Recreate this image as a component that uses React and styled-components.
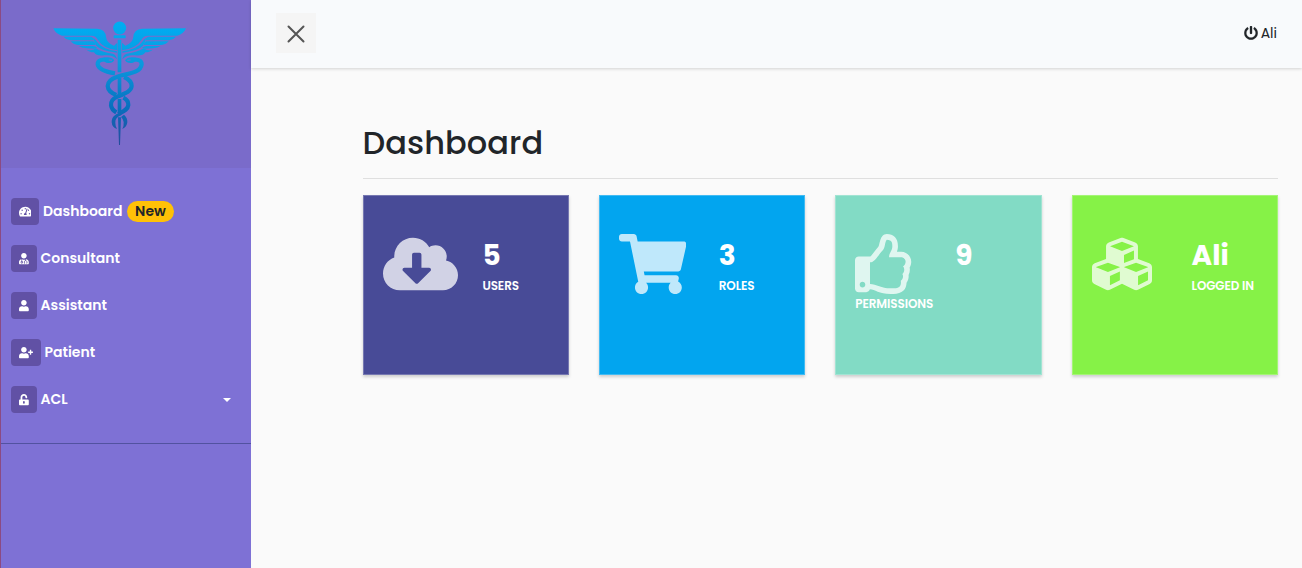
import React from 'react';
import styled, { createGlobalStyle } from 'styled-components';
import {
  FaTachometerAlt, FaUserMd, FaUser, FaUserPlus, FaUnlockAlt, FaPowerOff,
  FaCloudDownloadAlt, FaShoppingCart, FaRegThumbsUp, FaCubes,
} from 'react-icons/fa';

const GlobalStyle = createGlobalStyle`
  *, *::before, *::after { box-sizing: border-box; }
  body { margin: 0; background: #fafafa; color: #212529; font-family: Poppins, Inter, sans-serif; }
`;

const Page = styled.div`
  display: flex;
  height: 568px;
  overflow: hidden;
`;

const Sidebar = styled.aside`
  width: 251px;
  flex: none;
  background: #7e71d5;
  border-left: 1px solid #8b4a83;
  color: #fff;
`;

const LogoPanel = styled.div`
  height: 168px;
  padding: 10px 0 0 39px;
  background: #7a6bca;
`;

const Menu = styled.ul`
  margin: 0;
  padding: 20px 0;
  list-style: none;
  height: 276px;
  border-bottom: 1px solid #5252a0;
`;

const MenuItem = styled.li`
  height: 47px;
  padding: 0 20px 0 10px;
  display: flex;
  align-items: center;
`;

const IconBox = styled.span`
  height: 27px;
  width: ${(p) => p.$w}px;
  border-radius: 4px;
  background: #6151a5;
  display: flex;
  align-items: center;
  justify-content: center;
  font-size: 11.2px;
  padding-top: 1px;

  svg { width: ${(p) => p.$ratio}em; height: 1em; }
`;

const MenuLabel = styled.span`
  margin-left: ${(p) => (p.$wide ? 4 : 3.5)}px;
  font-size: 14px;
  line-height: 21px;
  font-weight: 600;
  white-space: nowrap;
`;

const Badge = styled.span`
  margin-left: 4.5px;
  width: 47px;
  height: 21px;
  border-radius: 11px;
  background: #ffc107;
  color: #212529;
  font-size: 14px;
  line-height: 21px;
  font-weight: 600;
  text-align: center;
`;

const Caret = styled.span`
  margin-left: auto;
  border-top: 4.2px solid #fff;
  border-left: 4.2px solid transparent;
  border-right: 4.2px solid transparent;
`;

const Main = styled.main`
  flex: 1;
  min-width: 0;
`;

const TopBar = styled.header`
  height: 68px;
  padding: 0 25px;
  display: flex;
  justify-content: space-between;
  align-items: center;
  background: #f8fafc;
  box-shadow: 0 1px 3px rgba(0, 0, 0, 0.16);
`;

const CloseButton = styled.button`
  width: 40px;
  height: 40px;
  padding: 1px 0 0;
  margin-top: -2px;
  border: 0;
  background: #f5f5f5;
  display: flex;
  align-items: center;
  justify-content: center;
`;

const UserLink = styled.span`
  display: flex;
  align-items: center;
  gap: 3px;
  margin-top: -2px;
  font-size: 14px;
  line-height: 21px;

  svg { margin-top: -1px; stroke: currentColor; stroke-width: 5; }
`;

const Content = styled.section`
  padding: 51px 24px 0 111.5px;
`;

const Title = styled.h1`
  margin: 0;
  height: 60px;
  border-bottom: 1px solid #dfdfdf;
  font-size: 32px;
  line-height: 48px;
  font-weight: 500;
  letter-spacing: 0.08px;
`;

const Cards = styled.div`
  margin-top: 16px;
  display: grid;
  grid-template-columns: repeat(4, 1fr);
  gap: 30px;
`;

const Card = styled.article`
  height: 180px;
  padding: 38px 19px 0;
  border: 1px solid rgba(255, 255, 255, 0.25);
  background: ${(p) => p.$color};
  box-shadow: 0 2px 3px rgba(0, 0, 0, 0.18);
  color: #fff;
`;

const CardTop = styled.div`
  display: flex;
  justify-content: space-between;
  height: 59px;
`;

const CardIcon = styled.span`
  font-size: 60px;
  line-height: 0;
  opacity: 0.75;

  svg { width: ${(p) => p.$ratio}em; height: 1em; }
`;

const Stat = styled.div`
  width: 66.5px;
  padding-top: 2px;
`;

const Value = styled.div`
  font-size: 28px;
  line-height: 40px;
  font-weight: 700;
`;

const Caption = styled.div`
  font-size: 12px;
  line-height: 18px;
  font-weight: 600;
  letter-spacing: -0.1px;
  white-space: nowrap;
  padding-top: ${(p) => (p.$below ? 2 : 1)}px;
`;

const wingFeathers = [
  'M40 55 L172 56 Q196 58 198 80 Q200 99 222 107 L232 98 L232 121 Q188 115 174 90 Q167 76 152 77 L66 77 Q47 72 40 55Z',
  'M70 80 L151 80 Q160 81 163 91 L91 91 Q77 89 70 80Z',
  'M92 94 L160 94 Q166 97 167 105 L114 105 Q99 103 92 94Z',
  'M116 108 L160 108 Q168 110 172 114 L161 116 L139 115 Q124 114 116 108Z',
  'M160 84 Q164 85 171 95 Q184 116 231 124 L231 128 Q182 122 169 107 Q163 98 160 84Z',
  'M140 119 Q156 124 167 115 Q185 127 218 131 Q229 135 231 148 Q217 133 193 136 Q169 139 162 127 Q146 126 140 119Z',
];

function Caduceus() {
  return (
    <svg width="160" height="145" viewBox="0 0 480 435">
      <defs>
        <linearGradient id="blue" gradientUnits="userSpaceOnUse" x1="0" y1="35" x2="0" y2="405">
          <stop offset="0" stopColor="#00aef3" />
          <stop offset="0.35" stopColor="#0a98de" />
          <stop offset="0.7" stopColor="#086fbe" />
          <stop offset="1" stopColor="#244b9b" />
        </linearGradient>
        <g id="wing">{wingFeathers.map((d) => <path key={d} d={d} />)}</g>
      </defs>
      <g fill="url(#blue)">
        <circle cx="239" cy="54" r="19.5" />
        <rect x="221" y="76" width="36" height="9" rx="2" />
        <path d="M233 89h11v98h-11zM233 204h11v50h-11zM233 267h11v42h-11zM234 322h9l-3 83h-3z" />
        <use href="#wing" />
        <use href="#wing" transform="translate(478 0) scale(-1 1)" />
        <path d="M190 143 Q215 138 223 151 Q218 161 199 158 L190 153Z" />
        <path d="M288 143 Q263 138 255 151 Q260 161 279 158 L288 153Z" />
      </g>
      <g fill="none" stroke="url(#blue)" strokeWidth="12.5">
        <path d="M205 150 C187 146 172 151 173 163 C175 177 196 185 225 190" />
        <path d="M273 150 C291 146 306 151 305 163 C301 190 263 189 232 200 C211 207 203 215 203 228 C204 241 213 249 229 255" />
        <path d="M252 201 Q275 211 275 228 C274 245 254 251 232 260 C218 266 212 274 213 286 Q215 299 229 307" />
        <path d="M250 263 Q265 270 265 285 C264 299 248 305 235 312" />
      </g>
      <g fill="url(#blue)">
        <path d="M244 306 C224 313 215 321 215 337 Q216 352 231 357 Q226 349 226 338 C225 328 231 321 244 315Z" />
        <path d="M252 314 Q263 324 262 337 Q261 351 247 357 Q252 347 251 336 Q250 327 243 321Z" />
      </g>
      <path d="M206 150l10 1M272 150l-10 1" stroke="#7a6bca" strokeWidth="3" />
    </svg>
  );
}

const menu = [
  { label: 'Dashboard', icon: FaTachometerAlt, ratio: 1.125, w: 28, badge: 'New' },
  { label: 'Consultant', icon: FaUserMd, ratio: 0.875, w: 26 },
  { label: 'Assistant', icon: FaUser, ratio: 0.875, w: 26 },
  { label: 'Patient', icon: FaUserPlus, ratio: 1.25, w: 30 },
  { label: 'ACL', icon: FaUnlockAlt, ratio: 0.875, w: 26, caret: true },
];

const cards = [
  { value: '5', label: 'USERS', icon: FaCloudDownloadAlt, ratio: 1.25, color: '#484b97' },
  { value: '3', label: 'ROLES', icon: FaShoppingCart, ratio: 1.125, color: '#02a5ef' },
  { value: '9', label: 'PERMISSIONS', icon: FaRegThumbsUp, ratio: 1, color: '#82dbc5', below: true },
  { value: 'Ali', label: 'LOGGED IN', icon: FaCubes, ratio: 1, color: '#86f247' },
];

export default function App() {
  return (
    <Page>
      <GlobalStyle />
      <Sidebar>
        <LogoPanel><Caduceus /></LogoPanel>
        <Menu>
          {menu.map(({ label, icon: Icon, ratio, w, badge, caret }) => (
            <MenuItem key={label}>
              <IconBox $w={w} $ratio={ratio}><Icon /></IconBox>
              <MenuLabel $wide={Boolean(badge)}>{label}</MenuLabel>
              {badge && <Badge>{badge}</Badge>}
              {caret && <Caret />}
            </MenuItem>
          ))}
        </Menu>
      </Sidebar>
      <Main>
        <TopBar>
          <CloseButton aria-label="Close menu">
            <svg width="18" height="18" viewBox="0 0 18 18" stroke="#555" strokeWidth="2" strokeLinecap="round">
              <path d="M1.5 1.5 16.5 16.5M16.5 1.5 1.5 16.5" />
            </svg>
          </CloseButton>
          <UserLink><FaPowerOff /> Ali</UserLink>
        </TopBar>
        <Content>
          <Title>Dashboard</Title>
          <Cards>
            {cards.map(({ value, label, icon: Icon, ratio, color, below }) => (
              <Card key={label} $color={color}>
                <CardTop>
                  <CardIcon $ratio={ratio}><Icon /></CardIcon>
                  <Stat>
                    <Value>{value}</Value>
                    {!below && <Caption>{label}</Caption>}
                  </Stat>
                </CardTop>
                {below && <Caption $below>{label}</Caption>}
              </Card>
            ))}
          </Cards>
        </Content>
      </Main>
    </Page>
  );
}
